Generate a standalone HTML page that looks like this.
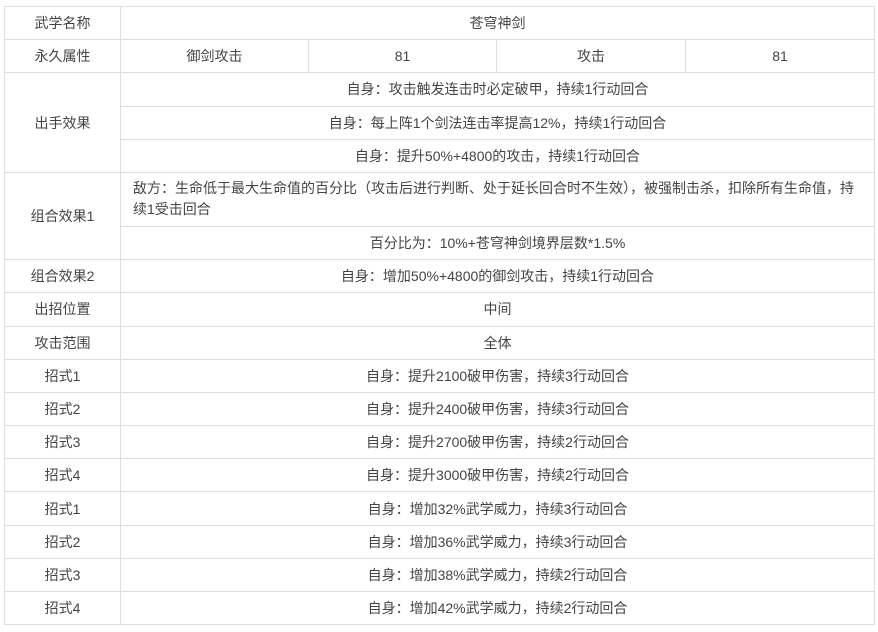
<!DOCTYPE html>
<html><head><meta charset="utf-8"><style>
html,body{margin:0;padding:0;background:#fff;width:878px;height:632px;overflow:hidden}
table{position:absolute;left:4px;top:6px;width:870px;border-collapse:collapse;table-layout:fixed;font-family:"Liberation Sans","Noto Sans CJK SC",sans-serif;font-size:14px;color:#444}
td{border:1px solid #ddd;text-align:center;padding:0 8px;height:32.2px;line-height:20px;overflow:hidden}
td.l{text-align:left;padding:0 10px 0 12px;line-height:21px}
tr.two td{height:53px}
</style></head><body>
<table>
<colgroup><col style="width:116px"><col style="width:188px"><col style="width:188px"><col style="width:189px"><col style="width:189px"></colgroup>
<tr><td>武学名称</td><td colspan="4">苍穹神剑</td></tr>
<tr><td>永久属性</td><td>御剑攻击</td><td>81</td><td>攻击</td><td>81</td></tr>
<tr><td rowspan="3">出手效果</td><td colspan="4">自身：攻击触发连击时必定破甲，持续1行动回合</td></tr>
<tr><td colspan="4">自身：每上阵1个剑法连击率提高12%，持续1行动回合</td></tr>
<tr><td colspan="4">自身：提升50%+4800的攻击，持续1行动回合</td></tr>
<tr class="two"><td rowspan="2">组合效果1</td><td colspan="4" class="l">敌方：生命低于最大生命值的百分比（攻击后进行判断、处于延长回合时不生效），被强制击杀，扣除所有生命值，持续1受击回合</td></tr>
<tr><td colspan="4">百分比为：10%+苍穹神剑境界层数*1.5%</td></tr>
<tr><td>组合效果2</td><td colspan="4">自身：增加50%+4800的御剑攻击，持续1行动回合</td></tr>
<tr><td>出招位置</td><td colspan="4">中间</td></tr>
<tr><td>攻击范围</td><td colspan="4">全体</td></tr>
<tr><td>招式1</td><td colspan="4">自身：提升2100破甲伤害，持续3行动回合</td></tr>
<tr><td>招式2</td><td colspan="4">自身：提升2400破甲伤害，持续3行动回合</td></tr>
<tr><td>招式3</td><td colspan="4">自身：提升2700破甲伤害，持续2行动回合</td></tr>
<tr><td>招式4</td><td colspan="4">自身：提升3000破甲伤害，持续2行动回合</td></tr>
<tr><td>招式1</td><td colspan="4">自身：增加32%武学威力，持续3行动回合</td></tr>
<tr><td>招式2</td><td colspan="4">自身：增加36%武学威力，持续3行动回合</td></tr>
<tr><td>招式3</td><td colspan="4">自身：增加38%武学威力，持续2行动回合</td></tr>
<tr><td>招式4</td><td colspan="4">自身：增加42%武学威力，持续2行动回合</td></tr>
</table>
</body></html>
